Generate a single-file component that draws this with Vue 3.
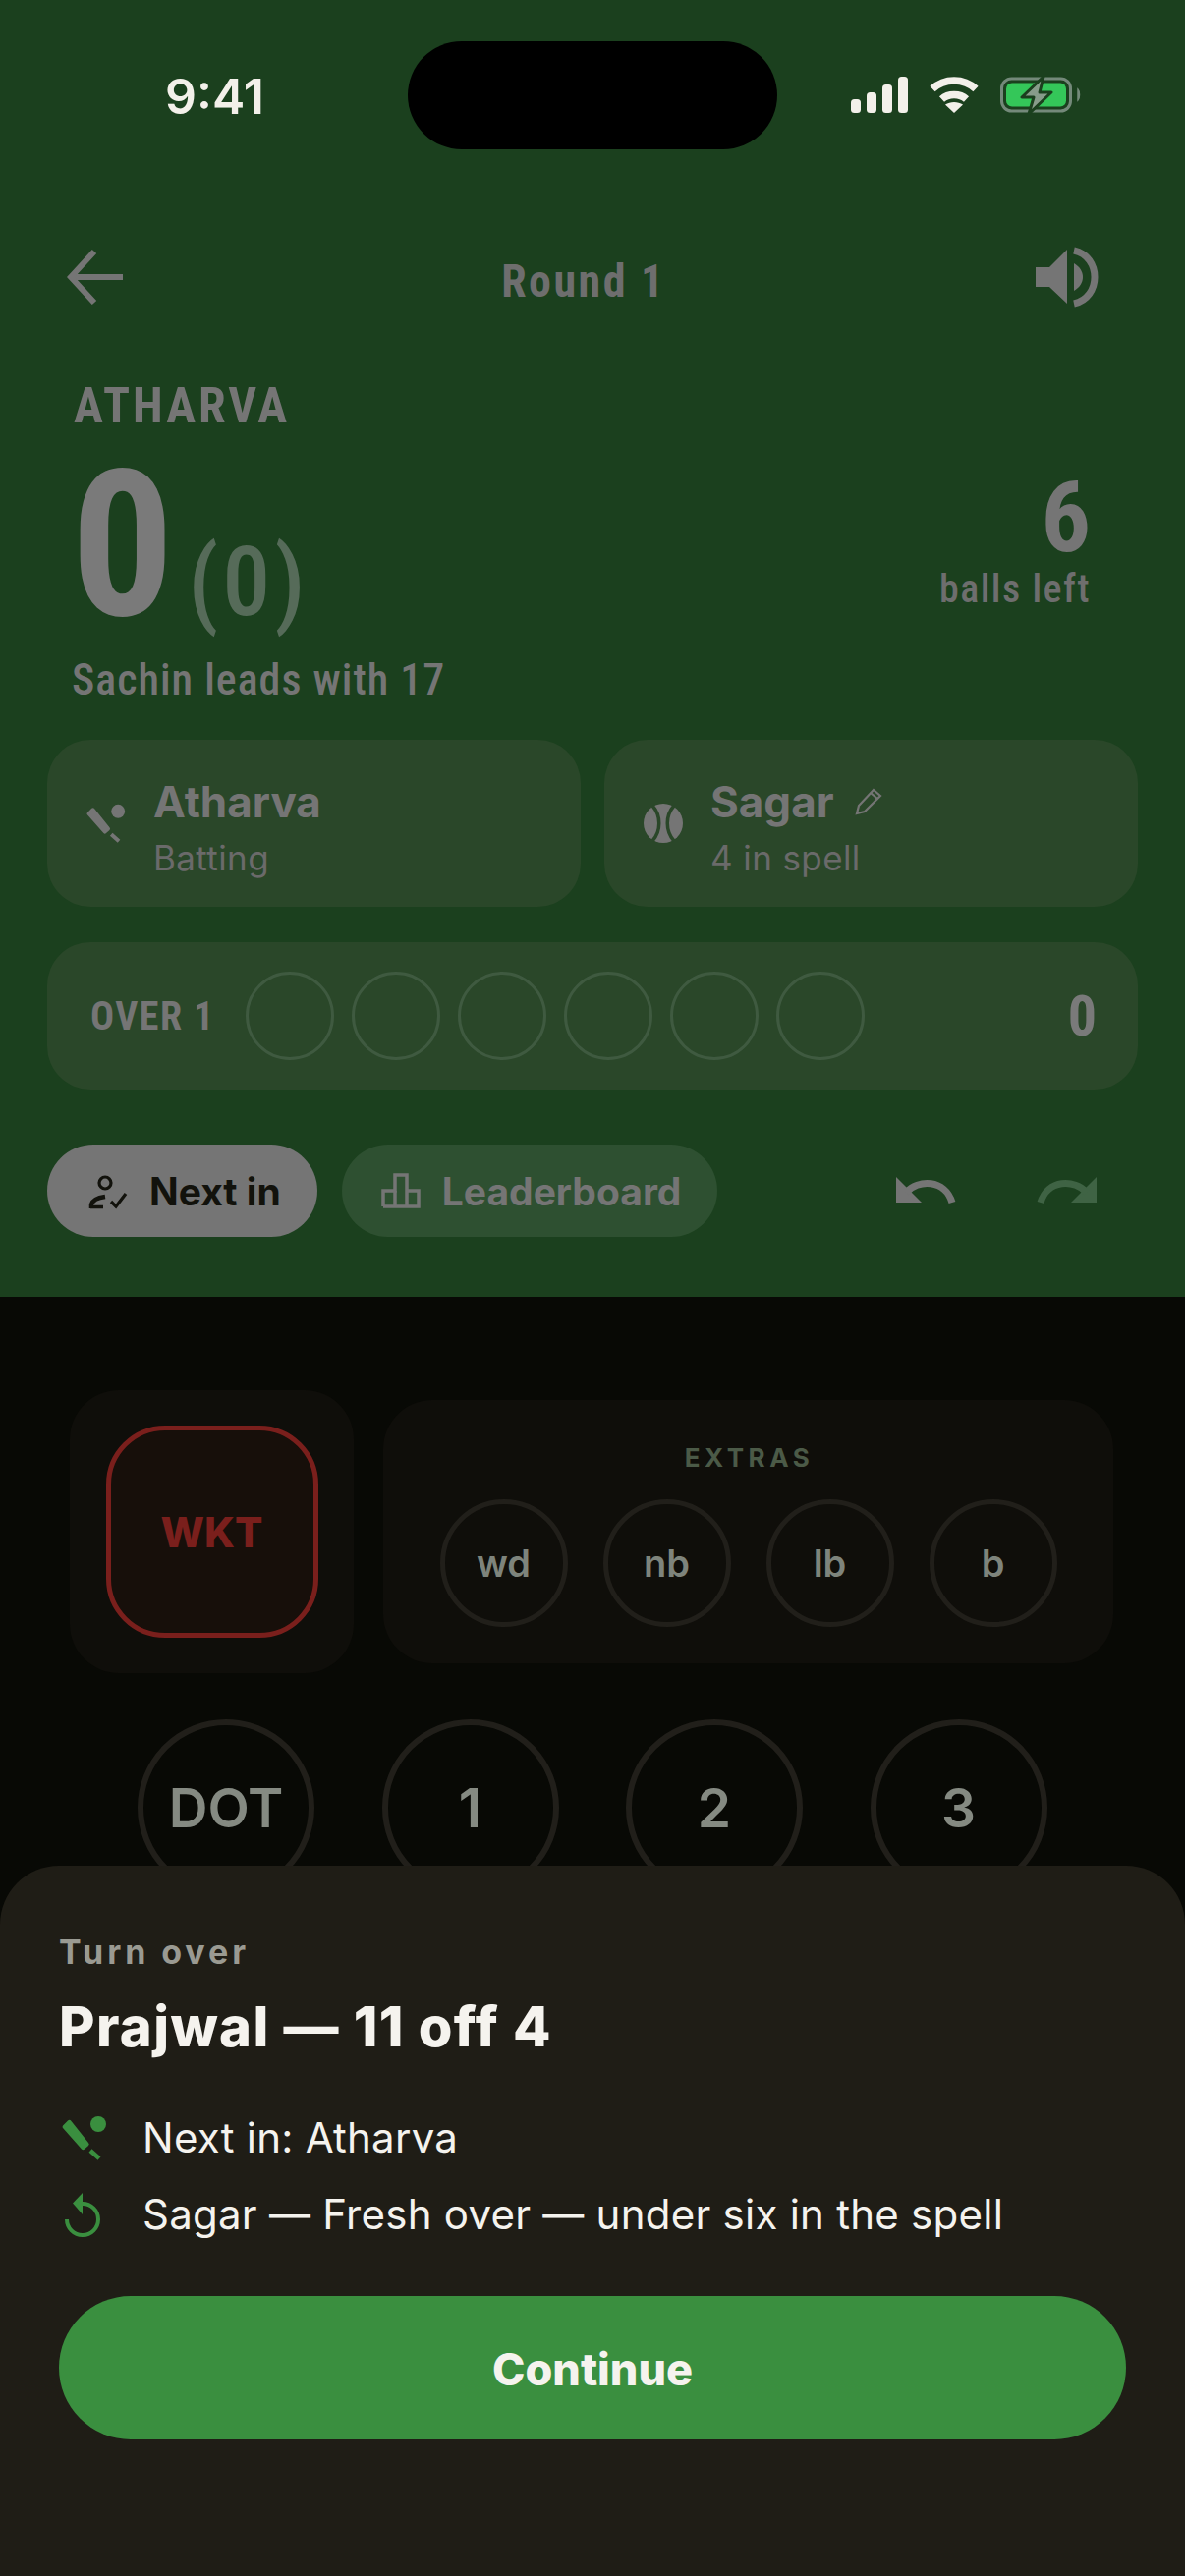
<template>
  <div class="page">
    <header class="top">
      <div class="status">
        <span class="clock">9:41</span>
        <div class="island"></div>
        <div class="status-icons">
          <svg width="58" height="38" viewBox="0 0 58 38" fill="#f3f0ea">
            <rect x="0" y="23" width="10" height="14" rx="3.5" />
            <rect x="16" y="16" width="10" height="21" rx="3.5" />
            <rect x="32" y="8" width="10" height="29" rx="3.5" />
            <rect x="48" y="0" width="10" height="37" rx="3.5" />
          </svg>
          <svg width="50" height="38" viewBox="0 0 50 38" fill="none" stroke="#f3f0ea">
            <path d="M3 12.5C15 1 35 1 47 12.5" stroke-width="7.5" />
            <path d="M12.5 23C19 17 31 17 37.5 23" stroke-width="7.5" />
            <path d="M25 37L16 28.5C21 25 29 25 34 28.5Z" fill="#f3f0ea" stroke="none" />
          </svg>
          <svg width="82" height="40" viewBox="0 0 82 40" fill="none">
            <rect x="1.5" y="3" width="70" height="33" rx="10" stroke="#74897a" stroke-width="3" />
            <rect x="6" y="7.5" width="61" height="24" rx="6" fill="#34c759" />
            <path d="M79 14C81 16 81 23 79 25Z" fill="#74897a" stroke="#74897a" stroke-width="1.5" />
            <path d="M44 1L22 22H34L29 39L52 17H40Z" fill="#879c8a" stroke="#1b401e" stroke-width="3" stroke-linejoin="round" />
          </svg>
        </div>
      </div>

      <div class="nav">
        <svg class="nav-back" width="58" height="56" viewBox="0 0 58 56" fill="none" stroke="#757575" stroke-width="6">
          <path d="M57 28H5" />
          <path d="M28 2L4 28L28 54" />
        </svg>
        <span class="nav-title cond">Round 1</span>
        <svg class="nav-sound" width="64" height="62" viewBox="0 0 64 62" fill="#757575">
          <path d="M0 21H14L32 3V58L14 41H0Z" />
          <path d="M39 17C51 24 51 38 39 45Z" />
          <path d="M39 4C67 10 67 52 39 58" fill="none" stroke="#757575" stroke-width="7" />
        </svg>
      </div>

      <div class="score-area">
        <div class="batter cond">ATHARVA</div>
        <div class="score-row">
          <div class="score cond">
            <span class="runs">0</span>
            <span class="balls">(0)</span>
          </div>
          <div class="left">
            <div class="left-num cond">6</div>
            <div class="left-label cond">balls left</div>
          </div>
        </div>
        <div class="lead cond">Sachin leads with 17</div>
      </div>

      <div class="players">
        <div class="player">
          <svg class="bat" viewBox="0 0 46 46" width="40" height="40">
            <path d="M6 5.5L1 10.5Q0 12 1 13L20 34.5Q21.5 36 23 34.5L27 31Q28.5 29.5 27 28L9.5 6Q8 4 6 5.5Z" fill="#757575" />
            <path d="M29 36L38 44" stroke="#757575" stroke-width="4.5" />
            <circle cx="37" cy="9" r="8" fill="#757575" />
          </svg>
          <div class="player-text">
            <div class="player-name">Atharva</div>
            <div class="player-sub">Batting</div>
          </div>
        </div>
        <div class="player">
          <svg class="ball" viewBox="0 0 40 40" width="40" height="40">
            <circle cx="20" cy="20" r="20" fill="#757575" />
            <path d="M9 2C18 12 18 28 9 38M31 2C22 12 22 28 31 38" fill="none" stroke="#2a4729" stroke-width="3.5" />
          </svg>
          <div class="player-text">
            <div class="player-name">
              Sagar
              <svg class="pencil" viewBox="0 0 30 30" width="30" height="30" fill="none" stroke="#757575" stroke-width="2.2">
                <path d="M3 27L5 19L20 3L27 9L11 25Z" />
                <path d="M17 6L24 12" />
              </svg>
            </div>
            <div class="player-sub">4 in spell</div>
          </div>
        </div>
      </div>

      <div class="over">
        <span class="over-label cond">OVER 1</span>
        <div class="over-balls">
          <span v-for="n in 6" :key="n" class="over-ball"></span>
        </div>
        <span class="over-total cond">0</span>
      </div>

      <div class="actions">
        <button class="pill pill-on">
          <svg viewBox="0 0 40 42" width="40" height="42" fill="none" stroke="#12120c" stroke-width="3.2">
            <circle cx="17" cy="13" r="6" />
            <path d="M3 39V35C4 31 10 28 17 27" stroke-width="4.5" />
            <path d="M2 37.5H15" stroke-width="3.5" />
            <path d="M23 32L28 37L38 24" />
          </svg>
          Next in
        </button>
        <button class="pill pill-off">
          <svg viewBox="0 0 40 36" width="40" height="36" fill="none" stroke="#757575" stroke-width="3.5">
            <path d="M2 34V18H14V2H26V34M26 18H38V34H2" />
            <path d="M14 18V34" />
          </svg>
          Leaderboard
        </button>
        <div class="history">
          <svg viewBox="0 0 62 30" width="62" height="30" fill="none">
            <path d="M0 1V27H26Z" fill="#757575" />
            <path d="M10 17C22 3 50 3 57 27" stroke="#757575" stroke-width="7" />
          </svg>
          <svg viewBox="0 0 62 30" width="62" height="30" fill="none">
            <path d="M62 1V27H36Z" fill="#3f6344" />
            <path d="M52 17C40 3 12 3 5 27" stroke="#3f6344" stroke-width="7" />
          </svg>
        </div>
      </div>
    </header>

    <main class="pad">
      <div class="pad-top">
        <div class="wkt-box">
          <button class="wkt">WKT</button>
        </div>
        <div class="extras">
          <div class="extras-label">EXTRAS</div>
          <div class="extras-row">
            <button v-for="e in extras" :key="e" class="extra">{{ e }}</button>
          </div>
        </div>
      </div>
      <div class="runs-row">
        <button v-for="r in runButtons" :key="r" class="run">{{ r }}</button>
      </div>
    </main>

    <section class="sheet">
      <div class="sheet-kicker">Turn over</div>
      <h2 class="sheet-title">Prajwal — 11 off 4</h2>
      <div class="sheet-line">
        <svg viewBox="0 0 46 46" width="46" height="46">
          <path d="M6 5.5L1 10.5Q0 12 1 13L20 34.5Q21.5 36 23 34.5L27 31Q28.5 29.5 27 28L9.5 6Q8 4 6 5.5Z" fill="#3a8f3f" />
          <path d="M29 36L38 44" stroke="#3a8f3f" stroke-width="4.5" />
          <circle cx="37" cy="9" r="8" fill="#3a8f3f" />
        </svg>
        <span>Next in: Atharva</span>
      </div>
      <div class="sheet-line">
        <svg viewBox="0 0 46 48" width="46" height="48" fill="none">
          <path d="M21 2L11 12.5L21 24Z" fill="#3a8f3f" />
          <path d="M21 13A16 16 0 1 1 5 29" stroke="#3a8f3f" stroke-width="4" />
        </svg>
        <span>Sagar — Fresh over — under six in the spell</span>
      </div>
      <button class="continue">Continue</button>
    </section>
  </div>
</template>

<script setup>
const extras = ['wd', 'nb', 'lb', 'b']
const runButtons = ['DOT', '1', '2', '3']
</script>

<style>
html,
body {
  margin: 0;
  background: #080905;
}
</style>

<style scoped>
.page {
  position: relative;
  width: 1206px;
  height: 2622px;
  overflow: hidden;
  background: #080905;
  font-family: Inter, "Liberation Sans", sans-serif;
}

button {
  font-family: inherit;
  padding: 0;
  border: none;
  background: none;
}

.cond {
  font-family: Roboto, "Liberation Sans", sans-serif;
  font-stretch: 75%;
}

/* Top panel */
.top {
  height: 1320px;
  box-sizing: border-box;
  padding: 42px 48px 0;
  background: #1b401e;
  color: #757575;
}

.status {
  display: flex;
  justify-content: space-between;
  align-items: center;
  height: 110px;
  padding: 0 0 0 120px;
  position: relative;
}

.clock {
  font-size: 50px;
  font-weight: 600;
  color: #f3f0ea;
  margin-top: 2px;
}

.island {
  position: absolute;
  left: 367px;
  top: 0;
  width: 376px;
  height: 110px;
  border-radius: 55px;
  background: #000;
}

.status-icons {
  display: flex;
  align-items: center;
  gap: 22px;
  margin-right: 58px;
}

.nav {
  display: flex;
  justify-content: space-between;
  align-items: center;
  height: 64px;
  margin-top: 98px;
  padding: 0 40px 0 20px;
}

.nav-title {
  font-size: 46px;
  font-weight: 700;
  letter-spacing: 2.5px;
  color: #6e6e6e;
  margin-left: 8px;
  margin-top: 8px;
}

.score-area {
  padding: 0 48px 0 27px;
  margin-top: 70px;
}

.batter {
  font-size: 50px;
  font-weight: 700;
  letter-spacing: 3px;
  line-height: 58px;
  margin-bottom: 18px;
}

.score-row {
  display: flex;
  justify-content: space-between;
  align-items: flex-start;
  height: 174px;
}

.score {
  display: flex;
  align-items: baseline;
  gap: 14px;
  margin-left: -3px;
  font-weight: 700;
}

.runs {
  font-size: 208px;
  line-height: 190px;
  color: #7a7a7a;
}

.balls {
  font-size: 98px;
  color: #566b59;
  font-weight: 500;
  letter-spacing: 4px;
}

.left {
  text-align: right;
  margin-top: 18px;
}

.left-num {
  font-size: 100px;
  font-weight: 700;
  line-height: 97px;
  color: #757575;
}

.left-label {
  font-size: 40px;
  font-weight: 500;
  letter-spacing: 1.5px;
  line-height: 50px;
  color: #6e6e6e;
}

.lead {
  font-size: 44px;
  font-weight: 500;
  letter-spacing: 1px;
  line-height: 56px;
  margin-left: -2px;
  margin-top: 30px;
}

.players {
  display: flex;
  gap: 24px;
  margin-top: 33px;
}

.player {
  flex: 1;
  height: 170px;
  box-sizing: border-box;
  display: flex;
  align-items: center;
  gap: 28px;
  padding-left: 40px;
  border-radius: 44px;
  background: #2a4729;
}

.player-text {
  padding-top: 8px;
}

.player-name {
  display: flex;
  align-items: center;
  gap: 20px;
  font-size: 44px;
  font-weight: 700;
  line-height: 56px;
}

.player-sub {
  font-size: 35px;
  letter-spacing: 0.4px;
  line-height: 46px;
  margin-top: 6px;
  color: #6a6a6a;
}

.over {
  display: flex;
  align-items: center;
  height: 150px;
  margin-top: 36px;
  padding: 0 42px 0 44px;
  border-radius: 44px;
  background: #2a4729;
}

.over-label {
  font-size: 40px;
  font-weight: 700;
  letter-spacing: 1.5px;
  width: 158px;
}

.over-balls {
  display: flex;
  gap: 18px;
}

.over-ball {
  width: 90px;
  height: 90px;
  box-sizing: border-box;
  border: 3px solid #3f5a40;
  border-radius: 50%;
}

.over-total {
  margin-left: auto;
  font-size: 58px;
  font-weight: 700;
  color: #7a7a7a;
}

.actions {
  display: flex;
  align-items: center;
  gap: 25px;
  margin-top: 56px;
}

.pill {
  display: flex;
  align-items: center;
  height: 94px;
  border-radius: 47px;
  font-size: 39px;
  font-weight: 700;
}

.pill-on {
  gap: 22px;
  padding: 0 37px 0 42px;
  background: #757575;
  color: #12120c;
}

.pill-off {
  gap: 22px;
  padding: 0 37px 0 40px;
  background: #2e5031;
  color: #757575;
}

.history {
  margin-left: auto;
  display: flex;
  gap: 80px;
  padding-right: 42px;
}

/* Scoring pad, dimmed behind the sheet */
.pad {
  padding: 95px 73px 0 71px;
}

.pad-top {
  display: flex;
  align-items: center;
  gap: 30px;
}

.wkt-box {
  width: 289px;
  height: 288px;
  box-sizing: border-box;
  display: flex;
  align-items: center;
  justify-content: center;
  border-radius: 50px;
  background: #0f0e0a;
}

.wkt {
  width: 216px;
  height: 216px;
  box-sizing: border-box;
  border: 5px solid #7a1f1c;
  border-radius: 60px;
  background: #170f0a;
  color: #7a1f1c;
  font-size: 42px;
  font-weight: 800;
}

.extras {
  flex: 1;
  height: 268px;
  box-sizing: border-box;
  padding-top: 44px;
  border-radius: 50px;
  background: #0f0e0a;
}

.extras-label {
  text-align: center;
  font-size: 26px;
  font-weight: 700;
  letter-spacing: 4.5px;
  line-height: 30px;
  margin-left: 2px;
  color: #4b5a47;
}

.extras-row {
  display: flex;
  justify-content: center;
  gap: 36px;
  margin-top: 27px;
}

.extra {
  width: 130px;
  height: 130px;
  box-sizing: border-box;
  border: 5px solid #211f1a;
  border-radius: 50%;
  font-size: 38px;
  font-weight: 600;
  color: #7e847c;
}

.runs-row {
  display: flex;
  gap: 68.5px;
  margin-top: 47px;
  padding-left: 69px;
}

.run {
  width: 180px;
  height: 180px;
  flex-shrink: 0;
  box-sizing: border-box;
  border: 6px solid #211f1a;
  border-radius: 50%;
  font-size: 55px;
  font-weight: 600;
  color: #858a82;
}

/* Bottom sheet */
.sheet {
  position: absolute;
  left: 0;
  right: 0;
  top: 1899px;
  bottom: 0;
  box-sizing: border-box;
  padding: 66px 60px 0;
  border-radius: 60px 60px 0 0;
  background: #1f1d16;
  color: #f5f3ee;
}

.sheet-kicker {
  font-size: 34px;
  font-weight: 700;
  letter-spacing: 3.9px;
  line-height: 44px;
  color: #9a9a92;
}

.sheet-title {
  margin: 20px 0 40px;
  font-size: 56px;
  font-weight: 800;
  letter-spacing: 1.45px;
  line-height: 68px;
}

.sheet-line {
  display: flex;
  align-items: center;
  gap: 36px;
  height: 78px;
  font-size: 42px;
  letter-spacing: 0.25px;
  line-height: 78px;
}

.sheet-line svg {
  flex-shrink: 0;
  margin-left: 3px;
}

.continue {
  display: block;
  width: 1086px;
  height: 146px;
  margin-top: 44px;
  padding-top: 2px;
  border-radius: 73px;
  background: #3a8f3f;
  color: #f5f3ee;
  font-size: 45px;
  font-weight: 800;
}
</style>
